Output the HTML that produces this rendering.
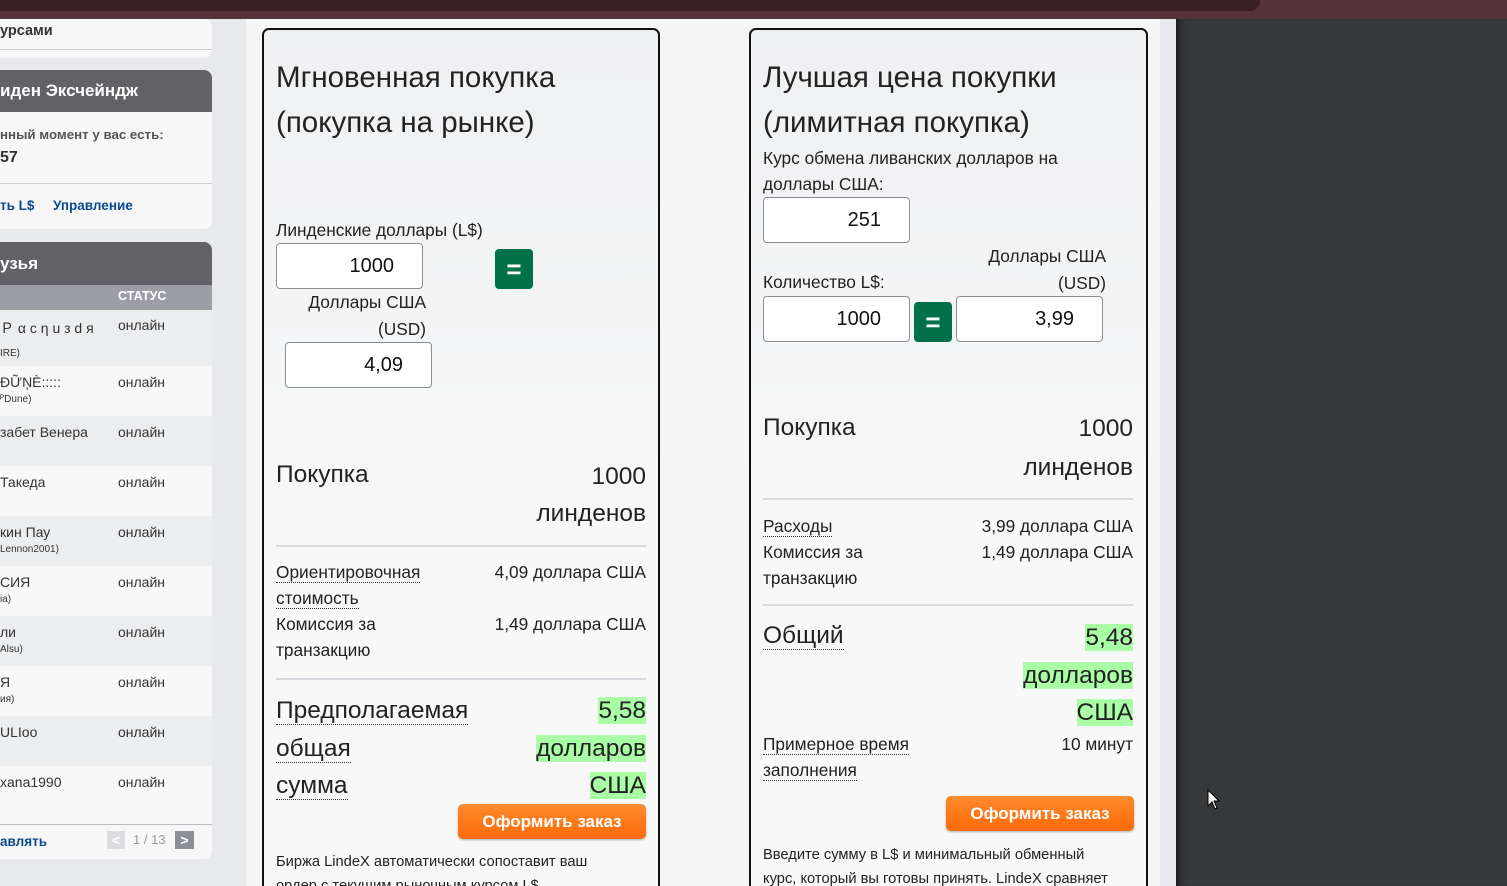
<!DOCTYPE html>
<html><head><meta charset="utf-8"><style>
*{margin:0;padding:0;box-sizing:border-box}
html,body{width:1507px;height:886px;overflow:hidden}
body{position:relative;background:#f5f5f5;font-family:"Liberation Sans",Arial,sans-serif;color:#222}
.a{position:absolute}
.side{left:0;top:0;width:246px;height:886px;background:#e8e9ec}
.panel{background:#f7f7f7;left:0;width:212px;border-radius:0 8px 8px 0}
.hdr{background:#616166;color:#fff;font-weight:bold;font-size:17px;padding-left:0;border-radius:0 8px 0 0}
.b{font-weight:bold}
.blue{color:#0b4a8e;font-weight:bold;font-size:13px}
.row{left:0;width:212px;height:50px;font-size:14px;color:#333}
.row .n{position:absolute;left:0;top:8px}
.row .s{position:absolute;left:0;top:28px;font-size:10px}
.row .st{position:absolute;left:118px;top:8px}
.card{border:2px solid #111;border-radius:7px;background:linear-gradient(#eff0f2,#f8f8f8 60%);height:870px}
.inp{background:#fff;border:1px solid #8a8f96;border-radius:4px;font-size:20px;text-align:right;padding-right:28px;height:46px;line-height:44px;color:#111}
.eq{background:#007048;border-radius:4px;width:38px;height:40px;color:#fff;font-size:26px;text-align:center;line-height:40px;font-weight:bold}
.t17{font-size:17.3px;line-height:26px}
.big{font-size:24.5px}
.dot{border-bottom:1px dotted #333}
.g{background:#aaffa6}
.hr{height:2px;background:#d6dadf}
.btn{background:linear-gradient(#ff8a30,#ff6a05);color:#fff;font-weight:bold;font-size:17px;text-align:center;border-radius:5px;height:35px;line-height:35px;width:188px;box-shadow:0 1px 2px rgba(0,0,0,.3)}
.r{text-align:right}
.ttl{font-size:29.5px;line-height:45px;color:#222}
</style></head><body>
<div class="a" style="left:0;top:0;width:1507px;height:19px;background:#54343a"></div>
<div class="a" style="left:0;top:0;width:1260px;height:11px;background:#3a1f24;border-radius:0 0 10px 0"></div>
<div class="a side" style="top:19px;height:867px"></div>
<div class="a" style="left:1160px;top:19px;width:16px;height:867px;background:#e8e9ec"></div>
<div class="a" style="left:1176px;top:19px;width:331px;height:867px;background:#37383a;box-shadow:inset 8px 0 8px -6px #111"></div>

<div class="a panel" style="top:19px;height:39px"></div>
<div class="a b" style="left:0;top:23px;font-size:14.5px;color:#333">урсами</div>
<div class="a" style="left:0;top:49px;width:212px;height:1px;background:#c9cbd0"></div>

<div class="a panel" style="top:70px;height:159px"></div>
<div class="a hdr" style="left:0;top:70px;width:212px;height:42px;line-height:42px">иден Эксчейндж</div>
<div class="a b" style="left:0;top:127px;font-size:13.3px;color:#555">нный момент у вас есть:</div>
<div class="a b" style="left:0;top:149px;font-size:16px;color:#333">57</div>
<div class="a" style="left:0;top:183px;width:212px;height:1px;background:#c9cbd0"></div>
<div class="a blue" style="left:0;top:198px;font-size:13.5px">ть L$</div>
<div class="a blue" style="left:53px;top:198px;font-size:13.5px">Управление</div>

<div class="a panel" style="top:242px;height:617px"></div>
<div class="a hdr" style="left:0;top:242px;width:212px;height:43px;line-height:43px">узья</div>
<div class="a" style="left:0;top:285px;width:212px;height:25px;background:#9d9ea5"></div>
<div class="a b" style="left:118px;top:289px;font-size:12.5px;color:#fff">СТАТУС</div>
<div class="a row" style="top:310px;height:56px;background:#ecedef"><span class="n">Ｐ α c η u з d я</span><span class="s" style="top:38px">IRE)</span><span class="st" style="top:7px">онлайн</span></div>
<div class="a row" style="top:366px;background:#f8f8f8"><span class="n">ĐỮŅÈ:::::</span><span class="s">ᴾDune)</span><span class="st">онлайн</span></div>
<div class="a row" style="top:416px;background:#ecedef"><span class="n">забет Венера</span><span class="st">онлайн</span></div>
<div class="a row" style="top:466px;background:#f8f8f8"><span class="n">Такеда</span><span class="st">онлайн</span></div>
<div class="a row" style="top:516px;background:#ecedef"><span class="n">кин Пау</span><span class="s">Lennon2001)</span><span class="st">онлайн</span></div>
<div class="a row" style="top:566px;background:#f8f8f8"><span class="n">СИЯ</span><span class="s">ia)</span><span class="st">онлайн</span></div>
<div class="a row" style="top:616px;background:#ecedef"><span class="n">ли</span><span class="s">Alsu)</span><span class="st">онлайн</span></div>
<div class="a row" style="top:666px;background:#f8f8f8"><span class="n">Я</span><span class="s">ия)</span><span class="st">онлайн</span></div>
<div class="a row" style="top:716px;background:#ecedef"><span class="n">ULIoo</span><span class="st">онлайн</span></div>
<div class="a row" style="top:766px;background:#f8f8f8"><span class="n">xana1990</span><span class="st">онлайн</span></div>
<div class="a" style="left:0;top:824px;width:212px;height:1px;background:#b9bcc2"></div>
<div class="a blue" style="left:0;top:834px;font-size:13.5px">авлять</div>
<div class="a" style="left:107px;top:831px;width:18px;height:18px;background:#dcdde0;color:#fff;font-size:14px;text-align:center;line-height:18px;font-weight:bold">&lt;</div>
<div class="a" style="left:133px;top:832px;font-size:13px;color:#999">1 / 13</div>
<div class="a" style="left:175px;top:831px;width:19px;height:18px;background:#8d8f94;color:#fff;font-size:14px;text-align:center;line-height:18px;font-weight:bold">&gt;</div>

<!-- left card -->
<div class="a card" style="left:262px;top:28px;width:398px"></div>
<div class="a ttl" style="left:276px;top:55px">Мгновенная покупка<br>(покупка на рынке)</div>
<div class="a t17" style="left:276px;top:217px">Линденские доллары (L$)</div>
<div class="a inp" style="left:276px;top:243px;width:147px">1000</div>
<div class="a eq" style="left:495px;top:249px">=</div>
<div class="a t17 r" style="left:266px;top:289px;width:160px;line-height:27px">Доллары США<br>(USD)</div>
<div class="a inp" style="left:285px;top:342px;width:147px">4,09</div>
<div class="a big" style="left:276px;top:461px">Покупка</div>
<div class="a big r" style="left:446px;top:458px;width:200px;line-height:37px">1000<br>линденов</div>
<div class="a hr" style="left:276px;top:545px;width:370px"></div>
<div class="a t17" style="left:276px;top:559px"><span class="dot">Ориентировочная</span><br><span class="dot">стоимость</span></div>
<div class="a t17 r" style="left:436px;top:559px;width:210px">4,09 доллара США</div>
<div class="a t17" style="left:276px;top:611px">Комиссия за<br>транзакцию</div>
<div class="a t17 r" style="left:436px;top:611px;width:210px">1,49 доллара США</div>
<div class="a hr" style="left:276px;top:678px;width:370px"></div>
<div class="a big" style="left:276px;top:692px;line-height:37.5px"><span class="dot">Предполагаемая</span><br><span class="dot">общая</span><br><span class="dot">сумма</span></div>
<div class="a big r" style="left:446px;top:692px;width:200px;line-height:37.5px"><span class="g">5,58</span><br><span class="g">долларов</span><br><span class="g">США</span></div>
<div class="a btn" style="left:458px;top:804px">Оформить заказ</div>
<div class="a" style="left:276px;top:850px;font-size:14.7px;line-height:24px">Биржа LindeX автоматически сопоставит ваш<br>ордер с текущим рыночным курсом L$</div>

<!-- right card -->
<div class="a card" style="left:749px;top:28px;width:399px"></div>
<div class="a ttl" style="left:763px;top:55px">Лучшая цена покупки<br>(лимитная покупка)</div>
<div class="a t17" style="left:763px;top:145px">Курс обмена ливанских долларов на<br>доллары США:</div>
<div class="a inp" style="left:763px;top:197px;width:147px">251</div>
<div class="a t17 r" style="left:946px;top:243px;width:160px;line-height:27px">Доллары США<br>(USD)</div>
<div class="a t17" style="left:763px;top:269px">Количество L$:</div>
<div class="a inp" style="left:763px;top:296px;width:147px">1000</div>
<div class="a eq" style="left:914px;top:302px">=</div>
<div class="a inp" style="left:956px;top:296px;width:147px">3,99</div>
<div class="a big" style="left:763px;top:414px">Покупка</div>
<div class="a big r" style="left:933px;top:409px;width:200px;line-height:39px">1000<br>линденов</div>
<div class="a hr" style="left:763px;top:498px;width:370px"></div>
<div class="a t17" style="left:763px;top:513px"><span class="dot">Расходы</span><br>Комиссия за<br>транзакцию</div>
<div class="a t17 r" style="left:923px;top:513px;width:210px">3,99 доллара США<br>1,49 доллара США</div>
<div class="a hr" style="left:763px;top:604px;width:370px"></div>
<div class="a big" style="left:763px;top:622px"><span class="dot">Общий</span></div>
<div class="a big r" style="left:933px;top:619px;width:200px;line-height:37.5px"><span class="g">5,48</span><br><span class="g">долларов</span><br><span class="g">США</span></div>
<div class="a t17" style="left:763px;top:731px"><span class="dot">Примерное время</span><br><span class="dot">заполнения</span></div>
<div class="a t17 r" style="left:933px;top:731px;width:200px">10 минут</div>
<div class="a btn" style="left:946px;top:796px">Оформить заказ</div>
<div class="a" style="left:763px;top:843px;font-size:14.7px;line-height:24px">Введите сумму в L$ и минимальный обменный<br>курс, который вы готовы принять. LindeX сравняет</div>

<svg class="a" style="left:1207px;top:789px" width="14" height="22" viewBox="0 0 14 22"><path d="M1 1 L1 17 L5 13 L8 20 L10 19 L7 12 L12 12 Z" fill="#fff" stroke="#000" stroke-width="1"/></svg>
</body></html>
